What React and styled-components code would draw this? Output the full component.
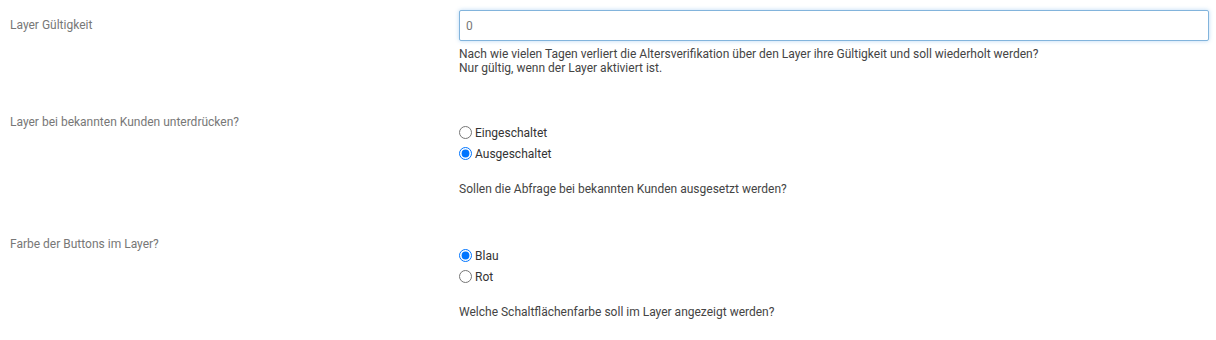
import React, { useState } from "react"
import styled, { createGlobalStyle } from 'styled-components';

const GlobalStyle = createGlobalStyle`
  body{
    margin: 0;
    background: #fff;
    font-family: Roboto, "Liberation Sans", sans-serif;
    font-size: 12px;
    color: #444;
  }
`;

const StyledForm = styled.div`
  display: flex;
  flex-direction: column;
  gap: 39px;
  padding: 10px 7px 0 10px;
`;

const Row = styled.div`
  display: grid;
  grid-template-columns: 449px 1fr;
  align-items: start;
  margin-top: ${p => p.$shift || 0}px;
`;

const Label = styled.div`
  color: #777;
  line-height: 16px;
  padding-top: ${p => p.$offset || 0}px;
`;

const Field = styled.div`
  display: flex;
  flex-direction: column;
  padding-top: ${p => p.$offset || 0}px;
`;

const TextInput = styled.input`
  box-sizing: border-box;
  height: 31px;
  width: 100%;
  padding: 0 6px;
  border: 1px solid #82b4dc;
  border-radius: 2px;
  box-shadow: 0 0 4px rgba(102, 170, 230, 0.45);
  font-family: inherit;
  font-size: 12px;
  color: #777;
  outline: none;
  margin-bottom: 6px;
`;

const Help = styled.div`
  color: #444;
  line-height: 14px;
  margin-top: ${p => p.$gap || 0}px;
`;

const RadioList = styled.div`
  display: flex;
  flex-direction: column;
`;

const RadioLabel = styled.label`
  display: flex;
  align-items: center;
  gap: 3px;
  height: 21px;
  color: #333;
  input{
    margin: 0;
    width: 13px;
    height: 13px;
  }
`;

function RadioGroup({ name, options, value, onChange }) {
  return (
    <RadioList>
      {options.map(o => (
        <RadioLabel key={o}>
          <input type="radio" name={name} checked={value === o} onChange={() => onChange(o)} />
          {o}
        </RadioLabel>
      ))}
    </RadioList>
  )
}

export default function App() {
  const [days, setDays] = useState('0')
  const [suppress, setSuppress] = useState('Ausgeschaltet')
  const [color, setColor] = useState('Blau')

  return (
    <StyledForm>
      <GlobalStyle />
      <Row>
        <Label $offset={7}>Layer Gültigkeit</Label>
        <Field>
          <TextInput value={days} onChange={e => setDays(e.target.value)} />
          <Help>Nach wie vielen Tagen verliert die Altersverifikation über den Layer ihre Gültigkeit und soll wiederholt werden?</Help>
          <Help>Nur gültig, wenn der Layer aktiviert ist.</Help>
        </Field>
      </Row>
      <Row>
        <Label>Layer bei bekannten Kunden unterdrücken?</Label>
        <Field $offset={8}>
          <RadioGroup name="suppress" options={['Eingeschaltet', 'Ausgeschaltet']} value={suppress} onChange={setSuppress} />
          <Help $gap={18}>Sollen die Abfrage bei bekannten Kunden ausgesetzt werden?</Help>
        </Field>
      </Row>
      <Row $shift={1}>
        <Label>Farbe der Buttons im Layer?</Label>
        <Field $offset={9}>
          <RadioGroup name="color" options={['Blau', 'Rot']} value={color} onChange={setColor} />
          <Help $gap={18}>Welche Schaltflächenfarbe soll im Layer angezeigt werden?</Help>
        </Field>
      </Row>
    </StyledForm>
  )
}
